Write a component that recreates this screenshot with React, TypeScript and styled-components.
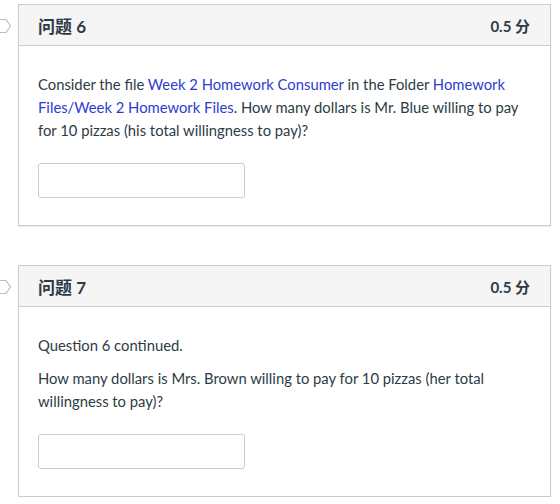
import styled, { createGlobalStyle } from 'styled-components';

const GlobalStyle = createGlobalStyle`
  body {
    margin: 0;
    background: #fff;
    font-family: Lato, 'Noto Sans CJK SC', sans-serif;
    color: #2d3b45;
  }
`;

interface IQuestionProps {
  number: number;
  points: string;
  children: React.ReactNode;
}

const Question = ({ number, points, children }: IQuestionProps) => {
  return (
    <Card>
      <Marker width="12" height="16" viewBox="0 0 12 16">
        <polygon points="-3,1.5 6,1.5 10.5,8 6,14.5 -3,14.5" fill="#fff" stroke="#b8bfc4" strokeWidth="1.2" />
      </Marker>
      <Header>
        <Title>问题 {number}</Title>
        <Points>{points}</Points>
      </Header>
      <Body>
        {children}
        <Answer type="text" />
      </Body>
    </Card>
  );
};

export default function App() {
  return (
    <>
      <GlobalStyle />
      <Page>
        <Question number={6} points="0.5 分">
          <Text>
            Consider the file <Link>Week 2 Homework Consumer</Link> in the Folder{' '}
            <Link>Homework Files/Week 2 Homework Files</Link>. How many dollars is Mr. Blue willing to pay
            for 10 pizzas (his total willingness to pay)?
          </Text>
        </Question>
        <Question number={7} points="0.5 分">
          <Text>Question 6 continued.</Text>
          <Text>How many dollars is Mrs. Brown willing to pay for 10 pizzas (her total willingness to pay)?</Text>
        </Question>
      </Page>
    </>
  );
}

const Page = styled.div`
  display: flex;
  flex-direction: column;
  gap: 39px;
  padding: 4px 9px 0 18px;
`;

const Card = styled.section`
  position: relative;
  border: 1px solid #c7cdd1;
  box-shadow: 0 1px 1px rgba(0, 0, 0, 0.08);
  background: #fff;
`;

const Marker = styled.svg`
  position: absolute;
  left: -19px;
  top: 13px;
`;

const Header = styled.div`
  display: flex;
  justify-content: space-between;
  align-items: center;
  height: 40px;
  padding: 0 20px 0 19px;
  background: #f5f5f5;
  border-bottom: 1px solid #c7cdd1;
`;

const Title = styled.h2`
  margin: 0;
  font-size: 17px;
  font-weight: 700;
  color: #2d3b45;
`;

const Points = styled.span`
  font-size: 15px;
  font-weight: 700;
  color: #2d3b45;
`;

const Body = styled.div`
  display: flex;
  flex-direction: column;
  align-items: flex-start;
  padding: 27px 20px 27px 19px;
`;

const Text = styled.p`
  margin: 0 0 10px;
  font-size: 14.8px;
  line-height: 23px;
  color: #2d3b45;

  &:last-of-type {
    margin-bottom: 21px;
  }
`;

const Link = styled.a`
  color: #2d3ccf;
  text-decoration: none;
  cursor: pointer;
`;

const Answer = styled.input`
  box-sizing: border-box;
  width: 207px;
  height: 35px;
  margin: 0;
  border: 1px solid #c7cdd1;
  border-radius: 3px;
  background: #fff;
  font: inherit;
  padding: 0 8px;
`;
